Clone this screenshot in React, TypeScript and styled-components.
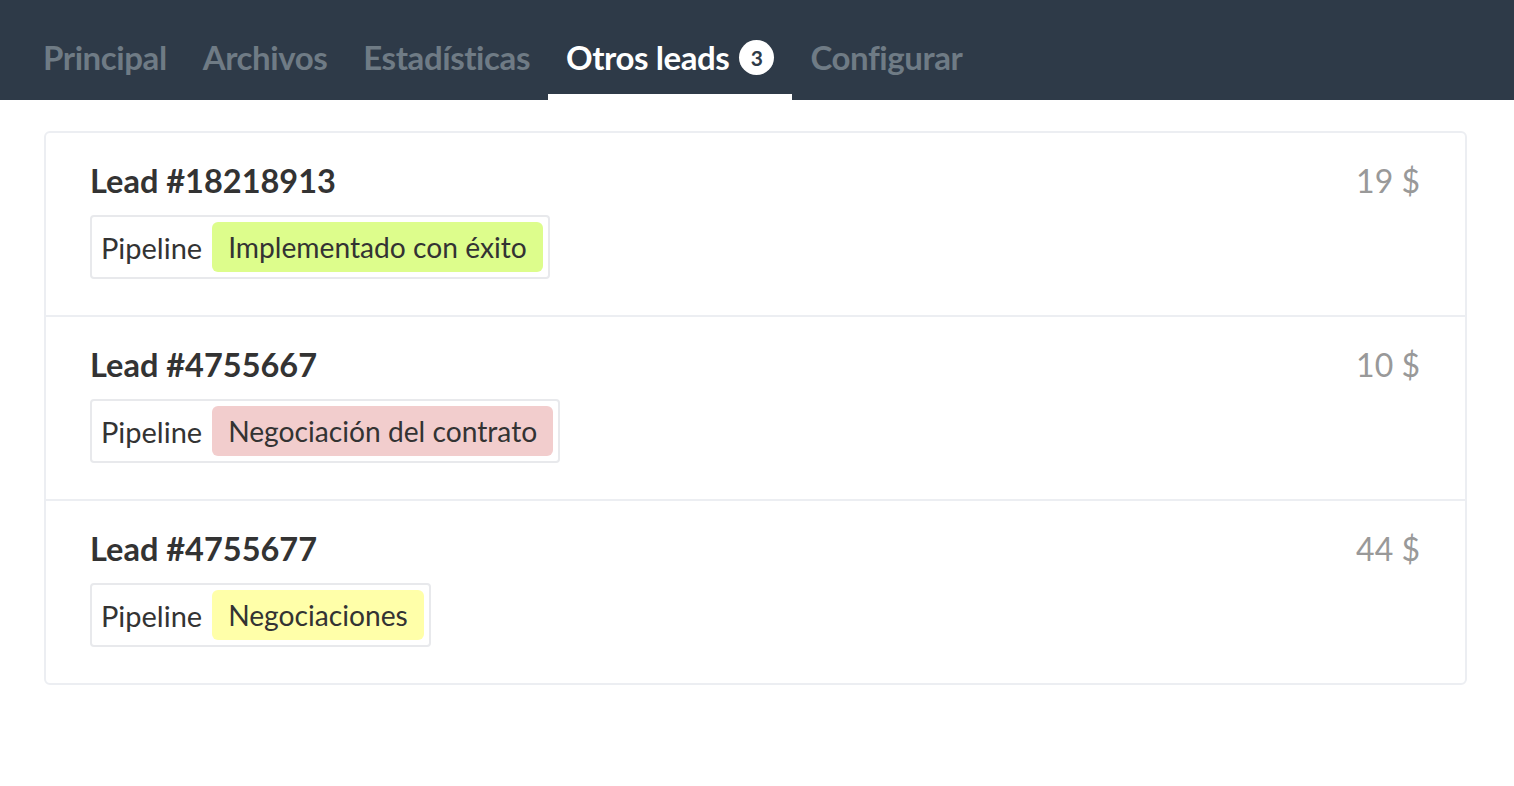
import React from 'react'
import styled, { createGlobalStyle } from 'styled-components'

const GlobalStyle = createGlobalStyle`
    body {
        margin: 0;
        background: #fff;
        font-family: 'Lato', 'Noto Sans', sans-serif;
    }
`

const TopBar = styled.div`
    display: flex;
    flex-direction: row;
    align-items: stretch;
    height: 100px;
    padding: 0 0 0 25px;
    background-color: #2e3a48;
    box-sizing: border-box;
`

const Tab = styled.div<{ active?: boolean }>`
    display: flex;
    flex-direction: row;
    align-items: center;
    gap: 10px;
    padding: 20px 18px 0;
    font-size: 33px;
    font-weight: 700;
    color: ${props => props.active ? '#ffffff' : '#6f7b85'};
    border-bottom: 6px solid ${props => props.active ? '#ffffff' : 'transparent'};
    box-sizing: border-box;
    letter-spacing: -0.42px;
`

const Badge = styled.span`
    display: inline-flex;
    align-items: center;
    justify-content: center;
    width: 35px;
    height: 35px;
    border-radius: 50%;
    background: #fff;
    color: #2e3a48;
    font-size: 21px;
    font-weight: 700;
    letter-spacing: 0;
`

const Content = styled.div`
    padding: 31px 47px 0 44px;
`

const Card = styled.div`
    display: flex;
    flex-direction: column;
    border: 2px solid #eceef2;
    border-radius: 6px;
    overflow: hidden;
`

const Row = styled.div`
    display: flex;
    flex-direction: row;
    justify-content: space-between;
    align-items: flex-start;
    height: 182px;
    padding: 29px 45px 0 44px;
    box-sizing: border-box;
    & + & {
        border-top: 2px solid #eceef2;
        height: 184px;
    }
`

const Info = styled.div`
    display: flex;
    flex-direction: column;
    align-items: flex-start;
    gap: 15px;
`

const Title = styled.span`
    color: #333;
    font-size: 32.5px;
    font-weight: 700;
    line-height: 38px;
`

const Price = styled.span`
    color: #999;
    font-size: 32px;
    line-height: 38px;
`

const Chip = styled.div`
    display: flex;
    flex-direction: row;
    align-items: center;
    gap: 10px;
    padding: 5px 5px 5px 9px;
    border: 2px solid #e8e9ec;
    border-radius: 4px;
    font-size: 29px;
    color: #333;
`

const Stage = styled.span<{ tone: string }>`
    display: inline-flex;
    align-items: center;
    height: 50px;
    padding: 0 16px;
    border-radius: 6px;
    font-size: 28.2px;
    background: ${props => props.tone};
`

const leads = [
    { id: 18218913, price: 19, stage: 'Implementado con éxito', tone: '#ddfd8c' },
    { id: 4755667, price: 10, stage: 'Negociación del contrato', tone: '#f2cdcd' },
    { id: 4755677, price: 44, stage: 'Negociaciones', tone: '#ffffa9' },
]

const App = () => {
    return (
        <>
            <GlobalStyle />
            <TopBar>
                <Tab>Principal</Tab>
                <Tab>Archivos</Tab>
                <Tab>Estadísticas</Tab>
                <Tab active>Otros leads <Badge>3</Badge></Tab>
                <Tab>Configurar</Tab>
            </TopBar>
            <Content>
                <Card>
                    {leads.map(lead => (
                        <Row key={lead.id}>
                            <Info>
                                <Title>Lead #{lead.id}</Title>
                                <Chip>
                                    Pipeline
                                    <Stage tone={lead.tone}>{lead.stage}</Stage>
                                </Chip>
                            </Info>
                            <Price>{lead.price} $</Price>
                        </Row>
                    ))}
                </Card>
            </Content>
        </>
    )
}

export default App
